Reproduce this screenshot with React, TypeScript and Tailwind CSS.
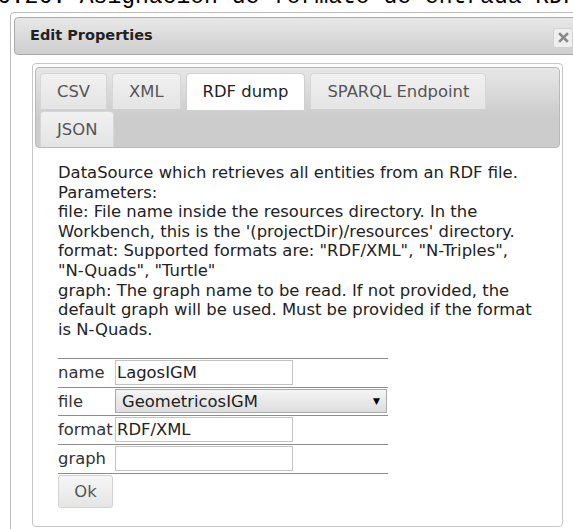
import React from 'react';

const tabs = ['CSV', 'XML', 'RDF dump', 'SPARQL Endpoint', 'JSON'];
const activeTab = 'RDF dump';

// help text, one entry per rendered line
const helpLines = [
  'DataSource which retrieves all entities from an RDF file.',
  'Parameters:',
  'file: File name inside the resources directory. In the',
  "Workbench, this is the '(projectDir)/resources' directory.",
  'format: Supported formats are: "RDF/XML", "N-Triples",',
  '"N-Quads", "Turtle"',
  'graph: The graph name to be read. If not provided, the',
  'default graph will be used. Must be provided if the format',
  'is N-Quads.',
];

const FieldRow: React.FC<{ label: string; last?: boolean; short?: boolean; children: React.ReactNode }> = ({
  label,
  last,
  short,
  children,
}) => (
  <div
    className={`flex items-center border-t border-[#8c8c8c] ${short ? 'h-[28px]' : 'h-[29px]'} ${
      last ? 'border-b h-[30px]' : ''
    }`}
  >
    <span className="w-[57px] shrink-0 text-[#333]">{label}</span>
    {children}
  </div>
);

const TextInput: React.FC<{ value: string }> = ({ value }) => (
  <input
    readOnly
    defaultValue={value}
    className="h-[25px] w-[178px] border border-[#c3c3c3] bg-white px-[1px] text-[#222] outline-none"
  />
);

export default function App() {
  return (
    <div className="h-[529px] w-[573px] overflow-hidden bg-white font-['DejaVu_Sans',sans-serif] text-[16.4px]">
      {/* caption of the figure above, cut by the page edge */}
      <div className="h-[11px] overflow-hidden">
        <p className="-ml-[3px] -mt-[14px] whitespace-nowrap font-['Liberation_Mono',monospace] text-[23px] leading-[23px] text-black">
          6.26: Asignación de formato de entrada RDF
        </p>
      </div>

      {/* dialog */}
      <div className="ml-[10px] mt-[1px] h-[600px] w-[580px] rounded-t-[4px] border border-[#bdbdbd] bg-white px-[3px] pt-[4px]">
        <div className="relative flex h-[38px] items-center rounded-[4px] border border-[#aaaaaa] bg-[linear-gradient(to_bottom,#e8e8e8,#cecece)] pl-[15px]">
          <span className="text-[14.5px] font-bold text-[#222]">Edit Properties</span>
          <button className="absolute right-[12px] top-[10px] flex h-[20px] w-[20px] items-start justify-center rounded-[3px] border border-[#d2d2d2] bg-[#efefef] pt-[3px]">
            <svg width="11" height="11" viewBox="0 0 11 11">
              <path d="M2 2 L9 9 M9 2 L2 9" stroke="#8a8a8a" strokeWidth="2.6" strokeLinecap="square" />
            </svg>
          </button>
        </div>

        <div className="px-[18px] pt-[8px]">
          {/* tab widget */}
          <div className="w-[531px] rounded-[4px] border border-[#c6c6c6] p-[2px] pt-[3px]">
            <div className="flex flex-wrap gap-x-[5px] gap-y-[2px] rounded-[4px] border border-[#b9b9b9] bg-[linear-gradient(to_bottom,#e7e7e7,#cccccc_62%)] pl-[4px] pt-[5px]">
              {tabs.map((t) =>
                t === activeTab ? (
                  <div
                    key={t}
                    className="-mb-[1px] h-[37px] rounded-t-[4px] border border-b-0 border-[#cfcfcf] bg-white px-4 py-2 leading-[19px] text-[#222]"
                  >
                    {t}
                  </div>
                ) : (
                  <div
                    key={t}
                    className="h-[36px] rounded-t-[4px] border border-b-0 border-[#d6d6d6] bg-[linear-gradient(to_bottom,#f1f1f1,#e4e4e4)] px-4 py-2 leading-[19px] text-[#555]"
                  >
                    {t}
                  </div>
                )
              )}
            </div>

            <div className="px-[23px] pb-[16px] pt-[15px] leading-[19.6px] text-[#222]">
              {helpLines.map((line) => (
                <p key={line} className="whitespace-nowrap">
                  {line}
                </p>
              ))}

              <div className="mt-[18.6px] w-[330px]">
                <FieldRow label="name">
                  <TextInput value="LagosIGM" />
                </FieldRow>
                <FieldRow label="file" short>
                  <div className="flex h-[24px] w-[272px] items-center justify-between border border-[#a9a9a9] bg-[linear-gradient(to_bottom,#f5f5f5,#dddddd)] pl-[6px] pr-[6px] text-[#222]">
                    <span>GeometricosIGM</span>
                    <span className="text-[9px] text-black">▼</span>
                  </div>
                </FieldRow>
                <FieldRow label="format">
                  <TextInput value="RDF/XML" />
                </FieldRow>
                <FieldRow label="graph" last>
                  <TextInput value="" />
                </FieldRow>
              </div>

              <button className="mt-[1px] h-[33px] w-[55px] rounded-[3px] border border-[#d3d3d3] bg-[linear-gradient(to_bottom,#f6f6f6,#e5e5e5)] text-[#555]">
                Ok
              </button>
            </div>
          </div>
        </div>
      </div>
    </div>
  );
}
